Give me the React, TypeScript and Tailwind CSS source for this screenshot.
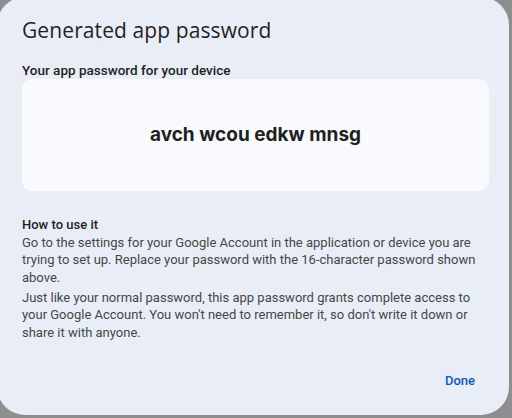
export default function App() {
  return (
    <div className="w-[512px] h-[418px] overflow-hidden bg-[#8e8e8e]" style={{ fontFamily: 'Roboto, "Liberation Sans", sans-serif' }}>
      <div className="-ml-[3px] -mt-[3px] w-[512px] h-[418px] rounded-[28px] bg-[#e9eef6] pl-[25px] pr-[20px] pt-[19px]">
        <h2 className="text-[21px] leading-[28px] text-[#1f1f1f] tracking-[0.1px]" style={{ fontFamily: '"Open Sans", Roboto, sans-serif' }}>
          Generated app password
        </h2>
        <p className="mt-[18px] text-[13.5px] leading-[16px] font-medium text-[#1f1f1f]">Your app password for your device</p>
        <div className="mt-[1px] h-[112px] rounded-[10px] bg-[#f8fafd] flex items-center justify-center">
          <span className="text-[19px] font-bold text-[#1f1f1f] tracking-[0px]" style={{ fontFamily: 'Inter, Roboto, sans-serif' }}>
            avch wcou edkw mnsg
          </span>
        </div>
        <div className="mt-[25px] pr-[3px] text-[13px] leading-[17.5px] text-[#444746]">
          <p className="font-medium text-[#1f1f1f]">How to use it</p>
          <p>
            Go to the settings for your Google Account in the application or device you are trying to set up. Replace your password with the 16-character password shown above.
          </p>
          <p className="mt-[2.5px]">
            Just like your normal password, this app password grants complete access to your Google Account. You won't need to remember it, so don't write it down or share it with anyone.
          </p>
        </div>
        <div className="mt-[30px] flex justify-end pr-[14px]">
          <button className="text-[13px] font-medium text-[#0b57d0]">Done</button>
        </div>
      </div>
    </div>
  );
}
